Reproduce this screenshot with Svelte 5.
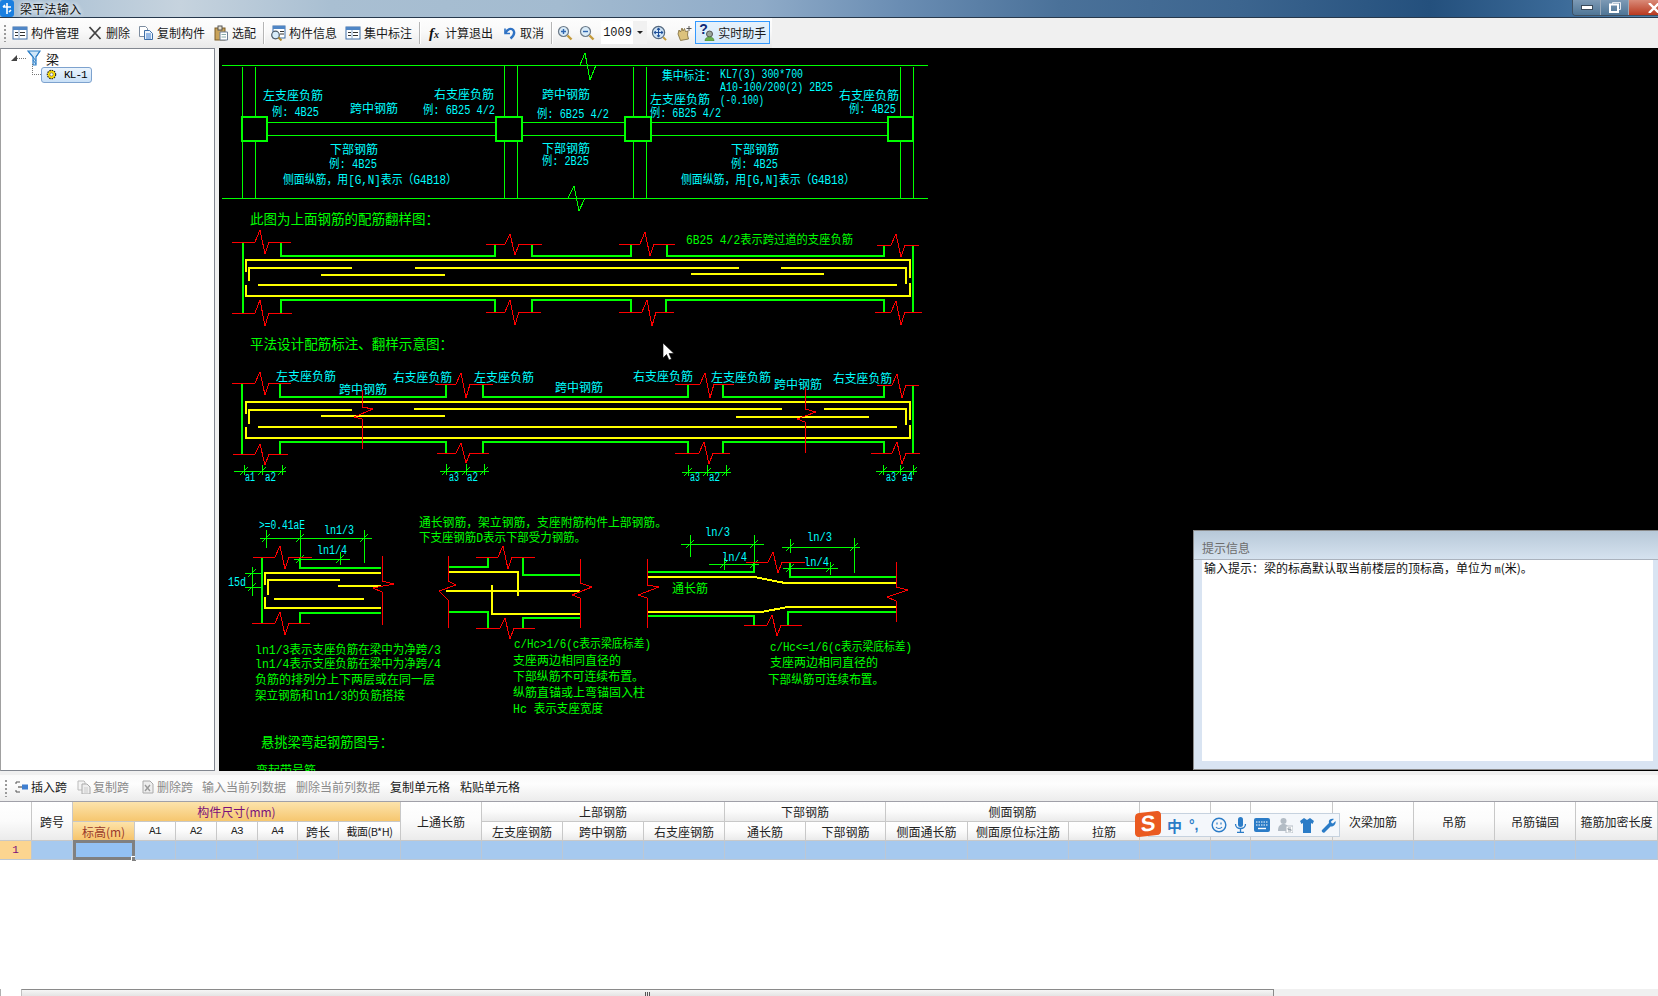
<script lang="ts">
	// zig-zag "break" symbol on a horizontal line
	function brk(x1: number, x2: number, c: number, y: number, up: number, down: number) {
		return `M${x1} ${y}H${c - 7}L${c - 2} ${y - up}L${c + 3} ${y + down}L${c + 7} ${y}H${x2}`;
	}

	// dimension tick: short vertical plus a slash
	function tick(x: number, y: number, y1: number, y2: number) {
		return `M${x} ${y1}V${y2}M${x - 4} ${y + 4}L${x + 4} ${y - 4}`;
	}

	const thin = [
		'M222 65H928', 'M222 198H928',
		'M242 67V117', 'M242 141V198', 'M255 67V117', 'M255 141V198',
		'M504 65V117', 'M504 141V198', 'M517 65V117', 'M517 141V198',
		'M633 67V117', 'M633 141V198', 'M646 67V117', 'M646 141V198',
		'M900 67V117', 'M900 141V198', 'M913 67V117', 'M913 141V198',
		'M267 122H496', 'M267 135H496', 'M522 122H625', 'M522 135H625', 'M651 122H888', 'M651 135H888',
		'M580 65L585 53L590 80L596 65', 'M568 198L574 186L579 211L585 198',
		// dimensions under the second beam
		'M234 471H286', tick(244, 471, 465, 475), tick(262, 471, 465, 475), tick(282, 471, 465, 475),
		'M440 471H489', tick(446, 471, 464, 475), tick(466, 471, 464, 475), tick(484, 471, 464, 475),
		'M682 472H731', tick(688, 472, 465, 476), tick(707, 472, 465, 476), tick(726, 472, 465, 476),
		'M876 471H917', tick(883, 471, 465, 475), tick(900, 471, 465, 475), tick(913, 471, 465, 475),
		// dimensions of the anchorage details
		'M260 538H372', tick(266, 538, 530, 548), tick(300, 538, 530, 548), tick(364, 538, 530, 563),
		'M294 559H350', tick(300, 559, 548, 568), tick(340, 559, 552, 565),
		'M252 567V596', 'M245 573H263', 'M245 587H263', 'M248 577L256 569', 'M248 591L256 583',
		'M681 544H764', tick(690, 544, 535, 557), tick(754, 544, 535, 572),
		'M709 564H759', tick(724, 564, 558, 570), tick(754, 564, 558, 570),
		'M782 547H860', tick(790, 547, 539, 553), tick(854, 547, 538, 573),
		'M783 568H838', tick(790, 568, 562, 575), tick(830, 568, 562, 575)
	];

	const thick = [
		'M242 117H267V141H242Z', 'M496 117H522V141H496Z', 'M625 117H651V141H625Z', 'M888 117H913V141H888Z',
		// first beam
		'M243 242V313', 'M913 245V312',
		'M281 243V256H495V244', 'M532 244V256H631V244', 'M667 244V256H884V245',
		'M281 313V300H495V312', 'M532 312V300H631V312', 'M666 312V300H884V312',
		// second beam
		'M242 383V454', 'M913 385V453',
		'M280 384V397H446V385', 'M483 385V397H688V385', 'M723 385V397H884V386',
		'M280 454V442H446V453', 'M483 453V442H688V453', 'M723 453V442H884V453',
		// details
		'M262 557V623', 'M300 558V568H381', 'M300 623V613H381',
		'M448 567H488V557', 'M523 557V575H580', 'M448 612H488V628', 'M523 628V618H580',
		'M648 572H754V563', 'M790 563V577H896', 'M648 616H754V625', 'M788 625V612H896'
	];

	const yellow = [
		'M246 272V260H910V278', 'M246 285V296H910V283',
		'M249 281V268H352', 'M415 268H739', 'M781 268H906V284', 'M321 275H445', 'M691 274H824', 'M258 285H897',
		'M246 414V402H910V420', 'M246 427V438H910V425',
		'M249 424V410H352', 'M414 409H782', 'M824 409H906V425', 'M321 416H445', 'M736 417H869', 'M258 427H897',
		'M265 585V573H381', 'M265 597V608H381', 'M268 595V580H340', 'M338 586H381', 'M274 599H364',
		'M448 572H518V596', 'M446 591H580', 'M492 585V614H580',
		'M648 577H754L785 583H896', 'M648 612H761L788 607H896'
	];

	const red = [
		brk(232, 291, 262, 242, 12, 12), brk(486, 542, 512, 244, 10, 11), brk(619, 675, 647, 244, 12, 12), brk(877, 919, 898, 245, 11, 12),
		brk(232, 292, 262, 313, 13, 13), brk(486, 541, 512, 312, 12, 13), brk(619, 674, 649, 312, 12, 14), brk(875, 922, 898, 312, 11, 13),
		brk(232, 291, 262, 383, 11, 12), brk(435, 493, 463, 384, 11, 14), brk(675, 734, 707, 384, 11, 14), brk(877, 919, 899, 385, 11, 13),
		brk(233, 288, 262, 454, 10, 11), brk(437, 489, 463, 453, 10, 10), brk(675, 730, 706, 453, 11, 11), brk(871, 920, 899, 453, 11, 11),
		'M362 390V407L373 409L354 417L362 419V449', 'M805 387V409L816 412L797 419L805 422V453',
		brk(253, 312, 282, 557, 11, 12), brk(252, 310, 282, 623, 11, 12),
		'M382 556V581L394 584L373 588L382 592V625',
		'M448 556V581L456 585L439 591L448 600V628', 'M580 559V583L592 587L572 595L580 598V628',
		brk(476, 535, 505, 557, 11, 12), brk(476, 535, 507, 628, 10, 11),
		'M647 559V585L659 587L638 595L647 598V628', 'M896 562V587L908 590L887 597L896 601V622',
		brk(746, 805, 775, 562, 10, 11), brk(744, 802, 774, 625, 10, 11)
	];

	const cyan = '#00ffff';
	const lime = '#00ff00';

	const labels = [
		['左支座负筋', 263, 100, 60], ['例: 4B25', 272, 116, 47], ['跨中钢筋', 350, 113, 48],
		['右支座负筋', 434, 99, 60], ['例: 6B25 4/2', 423, 114, 72], ['跨中钢筋', 542, 99, 48],
		['例: 6B25 4/2', 537, 118, 72], ['集中标注\uFF1A', 662, 80, 54], ['KL7(3) 300*700', 720, 78, 83],
		['A10-100/200(2) 2B25', 720, 91, 113], ['左支座负筋', 650, 104, 60], ['(-0.100)', 720, 104, 44],
		['例: 6B25 4/2', 650, 117, 71], ['右支座负筋', 839, 100, 60], ['例: 4B25', 849, 113, 47],
		['下部钢筋', 330, 154, 48], ['例: 4B25', 329, 168, 48], ['侧面纵筋\uFF0C用[G,N]表示\uFF08G4B18\uFF09', 283, 184, 174],
		['下部钢筋', 542, 153, 48], ['例: 2B25', 542, 165, 47], ['下部钢筋', 731, 154, 48],
		['例: 4B25', 731, 168, 47], ['侧面纵筋\uFF0C用[G,N]表示\uFF08G4B18\uFF09', 681, 184, 174],
		['左支座负筋', 276, 381, 60], ['跨中钢筋', 339, 394, 48], ['右支座负筋', 393, 382, 59],
		['左支座负筋', 474, 382, 60], ['跨中钢筋', 555, 392, 48], ['右支座负筋', 633, 381, 60],
		['左支座负筋', 711, 382, 60], ['跨中钢筋', 774, 389, 48], ['右支座负筋', 833, 383, 59],
		['a1', 245, 481, 10], ['a2', 265, 481, 11], ['a3', 449, 481, 10], ['a2', 467, 481, 11],
		['a3', 690, 481, 10], ['a2', 709, 481, 11], ['a3', 886, 481, 10], ['a4', 902, 481, 11],
		['>=0.41aE', 259, 529, 46], ['ln1/3', 324, 534, 30], ['ln1/4', 317, 554, 30], ['15d', 228, 586, 18],
		['ln/3', 705, 536, 25], ['ln/4', 722, 561, 25], ['ln/3', 807, 541, 25], ['ln/4', 804, 566, 25]
	];

	const notes = [
		['6B25 4/2表示跨过道的支座负筋', 686, 244, 167],
		['通长钢筋\uFF0C架立钢筋\uFF0C支座附筋构件上部钢筋。', 419, 527, 248], ['下支座钢筋D表示下部受力钢筋。', 419, 542, 167],
		['ln1/3表示支座负筋在梁中为净跨/3', 255, 654, 186], ['ln1/4表示支座负筋在梁中为净跨/4', 255, 668, 186],
		['负筋的排列分上下两层或在同一层', 255, 684, 180], ['架立钢筋和ln1/3的负筋搭接', 255, 700, 150],
		['通长筋', 672, 593, 36],
		['c/Hc>1/6(c表示梁底标差)', 514, 648, 137], ['支座两边相同直径的', 513, 665, 108],
		['下部纵筋不可连续布置。', 513, 681, 131], ['纵筋直锚或上弯锚固入柱', 513, 697, 132], ['Hc 表示支座宽度', 513, 713, 90],
		['c/Hc<=1/6(c表示梁底标差)', 770, 651, 142], ['支座两边相同直径的', 770, 667, 108], ['下部纵筋可连续布置。', 768, 684, 116],
		['弯起带号筋', 256, 775, 60]
	];

	const headings = [
		['此图为上面钢筋的配筋翻样图\uFF1A', 250, 224, 189],
		['平法设计配筋标注、翻样示意图\uFF1A', 250, 349, 203],
		['悬挑梁弯起钢筋图号\uFF1A', 261, 747, 132]
	];

	const widths = [32, 41, 62, 41, 41, 41, 40, 41, 62, 81, 81, 81, 81, 81, 80, 82, 101, 71, 71, 40, 82, 81, 81, 81, 82];
	const gridCols = widths.map((w) => w + 'px').join(' ');

	// tall = spans both header rows, cols = spans several columns
	const head = [
		{ t: '', tall: true },
		{ t: '跨号', tall: true },
		{ t: '构件尺寸(mm)', cols: 7, kind: 'orange' },
		{ t: '上通长筋', tall: true },
		{ t: '上部钢筋', cols: 3 },
		{ t: '下部钢筋', cols: 2 },
		{ t: '侧面钢筋', cols: 3 },
		{ t: '', tall: true },
		{ t: '', tall: true },
		{ t: '', tall: true },
		{ t: '次梁加筋', tall: true },
		{ t: '吊筋', tall: true },
		{ t: '吊筋锚固', tall: true },
		{ t: '箍筋加密长度', tall: true },
		{ t: '标高(m)', kind: 'active' },
		{ t: 'A1', kind: 'mono' }, { t: 'A2', kind: 'mono' }, { t: 'A3', kind: 'mono' }, { t: 'A4', kind: 'mono' },
		{ t: '跨长' }, { t: '截面(B*H)', kind: 'narrow' },
		{ t: '左支座钢筋' }, { t: '跨中钢筋' }, { t: '右支座钢筋' },
		{ t: '通长筋' }, { t: '下部钢筋' },
		{ t: '侧面通长筋' }, { t: '侧面原位标注筋' }, { t: '拉筋' }
	];
</script>

{#snippet listIcon()}
	<svg class="ico" viewBox="0 0 16 16">
		<rect x="1" y="2" width="14" height="12" fill="#fff" stroke="#3f6fa8"/>
		<rect x="1" y="2" width="14" height="3" fill="#4f86c6"/>
		<path d="M3 7.5h3M3 10.5h3M8 7.5h5M8 10.5h5" stroke="#333" fill="none"/>
		<path d="M7 5v9" stroke="#8aa8cc"/>
	</svg>
{/snippet}

<div class="app">
	<header class="titlebar">
		<svg class="app-icon" viewBox="0 0 14 17">
			<rect x="0" y="0" width="14" height="17" rx="3" fill="#1a7fe0"/>
			<path d="M7 3v11M3 7h8M3 7l2-2M11 10l-2 2" stroke="#fff" stroke-width="1.6" fill="none"/>
		</svg>
		<span class="title">梁平法输入</span>
		<div class="win-btns">
			<div class="win-btn">
				<svg width="12" height="6" viewBox="0 0 12 6"><rect x="0.5" y="0.5" width="11" height="4" fill="#fff" stroke="#3a4a5a"/></svg>
			</div>
			<div class="win-btn">
				<svg width="12" height="11" viewBox="0 0 12 11"><path d="M3.5 2V.5h8v7H10" fill="none" stroke="#dfe6ee"/><rect x="1" y="2.5" width="8" height="7.5" fill="none" stroke="#fff" stroke-width="2"/></svg>
			</div>
			<div class="win-btn close">
				<svg width="12" height="10" viewBox="0 0 12 10"><path d="M1 0l10 10M11 0L1 10" stroke="#fff" stroke-width="2.4"/></svg>
			</div>
		</div>
	</header>

	<div class="toolbar">
		<div class="strip">
			<span class="grip"></span>
			<div class="tool">{@render listIcon()}<span>构件管理</span></div>
			<div class="tool">
				<svg class="ico" viewBox="0 0 16 16"><path d="M2.5 2l11 12M13.5 2l-11 12" stroke="#444" stroke-width="1.8"/></svg>
				<span>删除</span>
			</div>
			<div class="tool">
				<svg class="ico" viewBox="0 0 16 16">
					<path d="M1.5 1.5h6l2 2v8h-8z" fill="#fff" stroke="#7d8da0"/>
					<path d="M6.5 5.5h5l3 3v6h-8z" fill="#eef4fb" stroke="#3f6fa8"/>
					<path d="M8 9h5M8 11h5M8 13h5" stroke="#3f7fd0"/>
				</svg>
				<span>复制构件</span>
			</div>
			<div class="tool">
				<svg class="ico" viewBox="0 0 16 16">
					<rect x="2" y="3" width="10" height="12" fill="#c9a35a" stroke="#7a5c28"/>
					<rect x="5" y="1" width="4" height="4" fill="#e8e2d0" stroke="#555"/>
					<path d="M7 7h7.5v8H7z" fill="#fff" stroke="#6d7f96"/>
					<path d="M8.5 9.5h4.5M8.5 12h4.5" stroke="#8aa"/>
				</svg>
				<span>选配</span>
			</div>
			<span class="sep"></span>
			<div class="tool">
				<svg class="ico" viewBox="0 0 16 16">
					<rect x="3" y="1" width="12" height="12" fill="#fff" stroke="#3f6fa8"/>
					<rect x="3" y="1" width="12" height="3" fill="#4f86c6"/>
					<path d="M10 6.5h4M10 9h4" stroke="#333"/>
					<circle cx="5.5" cy="10" r="3.8" fill="#d7ecfa" stroke="#4b5a66" stroke-width="1.2"/>
					<path d="M8.5 12.5l3 3" stroke="#b08a30" stroke-width="2"/>
				</svg>
				<span>构件信息</span>
			</div>
			<div class="tool">{@render listIcon()}<span>集中标注</span></div>
			<span class="sep"></span>
			<div class="tool">
				<span class="ico fx">f<small>x</small></span>
				<span>计算退出</span>
			</div>
			<div class="tool">
				<svg class="ico" viewBox="0 0 16 16">
					<path d="M4 3.5v5h5" fill="none" stroke="#2f72c4" stroke-width="1.6"/>
					<path d="M4.5 8C6 4 10.5 2.5 12.5 5.5 14 8 12.5 11 9.5 13.5" fill="none" stroke="#2f72c4" stroke-width="2.4"/>
				</svg>
				<span>取消</span>
			</div>
			<span class="sep"></span>
			<div class="tool bare">
				<svg class="ico" viewBox="0 0 16 16">
					<circle cx="6.5" cy="6.5" r="5" fill="#d9ebf8" stroke="#6c7a88" stroke-width="1.2"/>
					<path d="M4 6.5h5M6.5 4v5" stroke="#2f66b0" stroke-width="1.4"/>
					<path d="M10.5 10.5l4 4" stroke="#c49a3a" stroke-width="2.4"/>
				</svg>
			</div>
			<div class="tool bare">
				<svg class="ico" viewBox="0 0 16 16">
					<circle cx="6.5" cy="6.5" r="5" fill="#d9ebf8" stroke="#6c7a88" stroke-width="1.2"/>
					<path d="M4 6.5h5" stroke="#2f66b0" stroke-width="1.4"/>
					<path d="M10.5 10.5l4 4" stroke="#c49a3a" stroke-width="2.4"/>
				</svg>
			</div>
			<div class="combo">
				<span>1009</span>
				<span class="caret"></span>
			</div>
			<div class="tool fit">
				<svg class="ico" viewBox="0 0 17 17">
					<circle cx="8" cy="8" r="6.5" fill="#cfe4f7" stroke="#566a80" stroke-width="1.3"/>
					<path d="M8 3.5v9M3.5 8h9M6.5 5L8 3.5 9.5 5M6.5 11L8 12.5 9.5 11M5 6.5L3.5 8 5 9.5M11 6.5L12.5 8 11 9.5" fill="none" stroke="#1f4f9a" stroke-width="1.1"/>
					<path d="M13 13l3 3" stroke="#c49a3a" stroke-width="2"/>
				</svg>
			</div>
			<div class="tool hand">
				<svg class="ico" viewBox="0 0 16 16">
					<path d="M2 9l1-4 1.5 2L6 3l1 3 1.5-2.5L9.500 6.500 12 6l-.5 4 1 4-8 1.500z" fill="#dcc27c" stroke="#7c6a3a" stroke-width=".8"/>
					<path d="M13 1v5M10.500 3.500h5" stroke="#555"/>
				</svg>
			</div>
			<div class="tool active">
				<svg class="ico" viewBox="0 0 16 16">
					<circle cx="10.500" cy="9" r="3" fill="#9aa69a" stroke="#555"/>
					<path d="M6 16c0-3 2-4 4.500-4s4.500 1 4.500 4z" fill="#6ab04c" stroke="#3f7a2c" stroke-width=".6"/>
				</svg>
				<span class="qmark">?</span>
				<span class="label">实时助手</span>
			</div>
		</div>
	</div>

	<main class="main">
		<aside class="tree">
			<div class="tree-row root">
				<span class="arrow"></span>
				<span class="dots"></span>
				<svg class="beam" width="14" height="16" viewBox="0 0 14 16">
					<path d="M1 1h12L9 7v8H6V7z" fill="#cfe6f8" stroke="#2f80c8" stroke-width="1.200"/>
					<path d="M6 7l3 4M6 10l3 4M1 1l5 6M13 1L9 7" fill="none" stroke="#2f80c8"/>
				</svg>
				<span>梁</span>
			</div>
			<div class="tree-row leaf">
				<span class="elbow"></span>
				<div class="node">
					<svg width="11" height="11" viewBox="0 0 10 10">
						<circle cx="5" cy="5" r="3.800" fill="#ffe000" stroke="#222" stroke-width="1" stroke-dasharray="1.400 .8"/>
						<circle cx="5" cy="5" r="1.500" fill="#fff" stroke="#555" stroke-width=".6"/>
					</svg>
					<span>KL-1</span>
				</div>
			</div>
		</aside>

		<section class="canvas">
			<svg class="drawing" width="1439" height="723" viewBox="219 48 1439 723">
				<g class="lines">
					{#each thin as d}<path {d} stroke="#00ff00" stroke-width="1"/>{/each}
					{#each thick as d}<path {d} stroke="#00ff00" stroke-width="2"/>{/each}
					{#each yellow as d}<path {d} stroke="#ffff00" stroke-width="2"/>{/each}
					{#each red as d}<path {d} stroke="#ff0000" stroke-width="1"/>{/each}
				</g>
				<g class="cad-text">
					{#each labels as [t, x, y, w]}
						<text {x} {y} fill={cyan} textLength={w} lengthAdjust="spacingAndGlyphs">{t}</text>
					{/each}
					{#each notes as [t, x, y, w]}
						<text {x} {y} fill={lime} textLength={w} lengthAdjust="spacingAndGlyphs">{t}</text>
					{/each}
					{#each headings as [t, x, y, w]}
						<text {x} {y} fill={lime} font-size="14" textLength={w} lengthAdjust="spacingAndGlyphs">{t}</text>
					{/each}
				</g>
				<path d="M663 343v15l3.500-3.500 2.500 5.500 2.500-1-2.500-5.500h5z" fill="#fff" stroke="#000" stroke-width=".6"/>
			</svg>

			<div class="hint">
				<div class="hint-title">提示信息</div>
				<div class="hint-body">输入提示&#xFF1A;梁的标高默认取当前楼层的顶标高&#xFF0C;单位为 <span class="hint-m">m</span>(米)。</div>
			</div>
		</section>
	</main>

	<div class="gap"></div>

	<div class="toolbar2">
		<span class="grip"></span>
		<div class="tool2">
			<svg class="ico2" viewBox="0 0 14 14">
				<path d="M1 2h4M1 2v2M1 12h4M1 12v-2" stroke="#555" fill="none"/>
				<path d="M3 7h4" stroke="#333"/>
				<rect x="7" y="4.500" width="6" height="5" fill="#3f7fd0"/>
			</svg>
			<span>插入跨</span>
		</div>
		<div class="tool2 off">
			<svg class="ico2" viewBox="0 0 14 14">
				<path d="M1 1h6l1 1v8H1z" fill="#f4f4f4" stroke="#bbb"/>
				<path d="M5 4h5l3 3v7H5z" fill="#eee" stroke="#aaa"/>
				<path d="M7 8h4M7 10h4M7 12h4" stroke="#ccc"/>
			</svg>
			<span>复制跨</span>
		</div>
		<div class="tool2 off">
			<svg class="ico2" viewBox="0 0 14 14">
				<path d="M2 1h7l3 3v9H2z" fill="#eee" stroke="#aaa"/>
				<path d="M4 5l5 6M9 5l-5 6" stroke="#999" stroke-width="1.400"/>
			</svg>
			<span>删除跨</span>
		</div>
		<div class="tool2 off"><span>输入当前列数据</span></div>
		<div class="tool2 off"><span>删除当前列数据</span></div>
		<div class="tool2"><span>复制单元格</span></div>
		<div class="tool2"><span>粘贴单元格</span></div>
	</div>

	<div class="table-wrap">
		<div class="grid" style="grid-template-columns: {gridCols}">
			{#each head as h}
				<div
					class="hcell {h.kind ?? ''}"
					class:tall={h.tall}
					style={h.cols ? `grid-column: span ${h.cols}` : undefined}
				>{h.t}</div>
			{/each}
			{#each widths as _, i}
				{#if i === 0}
					<div class="dcell rownum">1</div>
				{:else if i === 2}
					<div class="dcell selected"><span class="handle"></span></div>
				{:else}
					<div class="dcell"></div>
				{/if}
			{/each}
		</div>

		<div class="ime">
			<div class="ime-logo">S</div>
			<span class="ime-zh">中</span>
			<span class="ime-punct">°,</span>
			<svg width="16" height="16" viewBox="0 0 16 16">
				<circle cx="8" cy="8" r="6.800" fill="none" stroke="#2b7cc7" stroke-width="1.400"/>
				<path d="M6 5.500v2M10 5.500v2M5 10c1.500 2 4.500 2 6 0" fill="none" stroke="#2b7cc7" stroke-width="1.200"/>
			</svg>
			<svg width="13" height="16" viewBox="0 0 13 16">
				<rect x="4" y="0" width="5" height="10" rx="2.500" fill="#2b7cc7"/>
				<path d="M1.500 7c0 6 10 6 10 0M6.500 12v3M3 15.500h7" fill="none" stroke="#2b7cc7" stroke-width="1.300"/>
			</svg>
			<svg width="16" height="14" viewBox="0 0 16 14">
				<rect x="0" y="0" width="16" height="14" rx="2" fill="#2b7cc7"/>
				<path d="M2 4h12M2 7h12" stroke="#fff" stroke-dasharray="1.500 1"/>
				<path d="M4 10.500h8" stroke="#fff" stroke-width="1.400"/>
			</svg>
			<svg width="16" height="16" viewBox="0 0 16 16">
				<circle cx="6.500" cy="4" r="3" fill="#b3bcc5"/>
				<path d="M1 14c0-5 2-7 5.500-7S12 9 12 14z" fill="#b3bcc5"/>
				<rect x="9" y="9" width="7" height="7" fill="#fff" stroke="#b3bcc5"/>
				<path d="M14 11h-3v1.500h3V14h-3" fill="none" stroke="#99a3ad"/>
			</svg>
			<svg width="14" height="15" viewBox="0 0 14 15">
				<path d="M4 0L0 3l1.500 3L3 5v10h8V5l1.500 1L14 3l-4-3-3 2z" fill="#2b7cc7"/>
			</svg>
			<svg width="15" height="15" viewBox="0 0 15 15">
				<path d="M1 12l7-7C7 2 10 0 13 1l-3 2.500.5 1.500 1.500.5L14.500 3c.8 3-2 6-5 5.500l-6 6c-1.500 1-3.500-1-2.500-2.500z" fill="#2b7cc7"/>
			</svg>
		</div>
	</div>

	<div class="hscroll">
		<span class="scroll-btn"></span>
		<div class="thumb"><span class="thumb-grip"></span></div>
	</div>
</div>

<style>
	:global(body) {
		margin: 0;
		background: #f0f0f0;
	}

	.app {
		width: 1658px;
		height: 996px;
		display: flex;
		flex-direction: column;
		overflow: hidden;
		background: #f0f0f0;
		font-family: "Noto Sans CJK SC", "Liberation Sans", sans-serif;
		font-size: 12px;
		color: #1a1a1a;
	}

	.titlebar {
		height: 17px;
		flex-shrink: 0;
		display: flex;
		align-items: center;
		border-bottom: 1px solid #26384c;
		background: linear-gradient(90deg, #a5bdd2 0, #c6d3de 180px, #a9bfd2 330px, #a3bbd0 560px, #8fabc8 760px, #6a8db3 900px, #4a7199 1060px, #3c658f 1240px, #24507d 1430px, #3b6a98 1560px, #5583ad 1658px);
	}

	.app-icon {
		width: 14px;
		height: 17px;
		display: block;
	}

	.title {
		margin-left: 6px;
		font-size: 12px;
		letter-spacing: 0.3px;
		color: #111;
		text-shadow: 0 0 5px #fff, 0 0 5px #fff;
	}

	.win-btns {
		margin-left: auto;
		height: 15px;
		align-self: flex-start;
		display: flex;
		border: 1px solid #3f5163;
		border-top: 0;
		border-right: 0;
		border-radius: 0 0 0 4px;
		overflow: hidden;
	}

	.win-btn {
		width: 27px;
		display: flex;
		align-items: center;
		justify-content: center;
		border-right: 1px solid #9ab;
		background: linear-gradient(#7d9ab5, #4f7596);
	}

	.win-btn.close {
		width: 29px;
		border-right: 0;
		justify-content: flex-start;
		padding-left: 19px;
		box-sizing: border-box;
		background: linear-gradient(#d98a78, #b9391f);
	}

	.win-btn.close svg {
		flex-shrink: 0;
	}

	.toolbar {
		height: 30px;
		flex-shrink: 0;
		display: flex;
		background: #f0f0f0;
	}

	.strip {
		width: 772px;
		display: flex;
		align-items: center;
		padding: 0 0 1px 8px;
		box-sizing: border-box;
		position: relative;
		white-space: nowrap;
		background: linear-gradient(#fdfdfd, #f9f9f9 45%, #e9e9e9);
	}

	.grip {
		position: absolute;
		left: 4px;
		top: 7px;
		width: 2px;
		height: 17px;
		background: repeating-linear-gradient(#9a9a9a 0 2px, transparent 2px 4px);
	}

	.tool {
		display: flex;
		align-items: center;
		gap: 3px;
		padding: 0 4px;
	}

	.ico {
		width: 16px;
		height: 16px;
		display: block;
		flex-shrink: 0;
	}

	.fx {
		font-family: "Liberation Serif", serif;
		font-style: italic;
		font-weight: 700;
		font-size: 15px;
		line-height: 16px;
		text-align: center;
		color: #111;
	}

	.fx small {
		font-size: 10px;
	}

	.sep {
		width: 1px;
		height: 22px;
		margin: 0 2px 0 3px;
		background: #b5b5b5;
		box-shadow: 1px 0 0 #fff;
	}

	.tool.bare {
		padding: 0 3px;
	}

	.combo {
		width: 46px;
		height: 23px;
		margin-left: 3px;
		display: flex;
		align-items: center;
		justify-content: space-between;
		background: #fff;
		font-family: "Liberation Mono", monospace;
		padding-left: 2px;
		box-sizing: border-box;
	}

	.caret {
		width: 14px;
		height: 100%;
		background: #f1f1f1;
		position: relative;
	}

	.caret::after {
		content: "";
		position: absolute;
		left: 4px;
		top: 10px;
		border: 3px solid transparent;
		border-top: 3px solid #222;
	}

	.tool.fit {
		padding: 0 5px 0 4px;
	}

	.tool.hand {
		padding: 0 2px 0 4px;
	}

	.tool.active {
		position: relative;
		margin-left: 1px;
		height: 23px;
		padding: 0 0 0 3px;
		width: 75px;
		flex-shrink: 0;
		box-sizing: border-box;
		border: 1px solid #3399ff;
		background: linear-gradient(#e6f2fc, #d6e9fa);
	}

	.label {
		white-space: nowrap;
		flex-shrink: 0;
	}

	.qmark {
		position: absolute;
		left: 3px;
		top: 0;
		font: bold 14px/14px "Liberation Sans", sans-serif;
		color: #0f2a78;
	}

	.main {
		height: 723px;
		flex-shrink: 0;
		display: flex;
	}

	.tree {
		width: 215px;
		margin-right: 4px;
		flex-shrink: 0;
		box-sizing: border-box;
		background: #fff;
		border: 1px solid #828790;
		border-left-color: #a0a0a0;
	}

	.tree-row {
		display: flex;
		align-items: center;
		height: 16px;
	}

	.tree-row.root {
		padding: 1px 0 0 10px;
		font-size: 13px;
		line-height: 15px;
	}

	.arrow {
		width: 0;
		height: 0;
		border-left: 6px solid transparent;
		border-bottom: 6px solid #444;
	}

	.dots {
		width: 9px;
		margin-right: 1px;
		border-top: 1px dotted #777;
	}

	.beam {
		margin-right: 5px;
	}

	.tree-row.leaf {
		padding-left: 31px;
		height: 17px;
	}

	.elbow {
		width: 8px;
		height: 10px;
		margin-top: -10px;
		border-left: 1px dotted #777;
		border-bottom: 1px dotted #777;
	}

	.node {
		width: 51px;
		height: 16px;
		box-sizing: border-box;
		display: flex;
		align-items: center;
		gap: 7px;
		padding-left: 4px;
		border: 1px solid #7da2ce;
		border-radius: 3px;
		background: linear-gradient(#ebf4fd, #c9e0f7);
		font-family: "Liberation Mono", monospace;
		font-size: 11px;
		letter-spacing: -0.9px;
		color: #000;
	}

	.canvas {
		flex: 1;
		position: relative;
		background: #000;
		overflow: hidden;
	}

	.drawing {
		display: block;
	}

	.lines path {
		fill: none;
		shape-rendering: crispEdges;
	}

	.cad-text {
		font-family: "Liberation Mono", "Noto Sans CJK SC", monospace;
		font-size: 12px;
	}

	.hint {
		position: absolute;
		right: 0;
		bottom: 1px;
		width: 465px;
		height: 240px;
		box-sizing: border-box;
		display: flex;
		flex-direction: column;
		border: 1px solid #8a8a8a;
		border-right: 0;
		background: #d9e4f2;
		padding: 0 5px 8px 8px;
	}

	.hint-title {
		height: 29px;
		margin: 0 -5px 0 -8px;
		padding: 9px 0 0 8px;
		box-sizing: border-box;
		flex-shrink: 0;
		color: #6c6c6c;
		line-height: 16px;
		background: linear-gradient(#b7c8d8, #d5e2ef);
		border-bottom: 1px solid #aab2bd;
	}

	.hint-body {
		flex: 1;
		background: #fff;
		color: #111;
		padding: 0 2px;
		line-height: 16px;
		white-space: nowrap;
	}

	.hint-m {
		font-family: "Liberation Mono", monospace;
		font-size: 10px;
	}

	.gap {
		height: 4px;
		flex-shrink: 0;
	}

	.toolbar2 {
		height: 26px;
		flex-shrink: 0;
		display: flex;
		align-items: center;
		padding: 0 0 3px 15px;
		box-sizing: border-box;
		position: relative;
		background: linear-gradient(#fafafa, #fdfdfd 35%, #ececec);
	}

	.toolbar2 .grip {
		left: 5px;
		top: 5px;
	}

	.tool2 {
		display: flex;
		align-items: center;
		gap: 2px;
		margin-right: 10px;
	}

	.tool2:nth-child(2) {
		margin-right: 10px;
	}

	.tool2:nth-child(3) {
		margin-right: 12px;
	}

	.tool2:nth-child(4) {
		margin-right: 9px;
	}

	.ico2 {
		width: 14px;
		height: 14px;
		display: block;
	}

	.tool2.off {
		color: #8a8a8a;
	}

	.table-wrap {
		position: relative;
		flex: 1;
		background: #fff;
		border-top: 1px solid #a0a0a8;
		border-left: 1px solid #b0b0b0;
		margin-left: -1px;
	}

	.grid {
		display: grid;
		grid-template-rows: 20px 19px 19px;
	}

	.hcell {
		display: flex;
		align-items: center;
		justify-content: center;
		box-sizing: border-box;
		white-space: nowrap;
		overflow: hidden;
		color: #222;
		font-size: 12px;
		border-right: 1px solid #c8c8c8;
		border-bottom: 1px solid #c8c8c8;
		background: linear-gradient(#ffffff, #fbfbfb 50%, #ebebeb);
	}

	.hcell.tall {
		grid-row: span 2;
	}

	.hcell.orange {
		background: linear-gradient(#fce3ac, #f6c76f);
		color: #7a0f7a;
	}

	.hcell.active {
		background: linear-gradient(#fde3a9, #f6c46c);
		color: #9a3a2a;
	}

	.hcell.narrow {
		font-size: 11px;
		letter-spacing: -0.5px;
	}

	.hcell.mono {
		font-family: "Liberation Mono", monospace;
		font-size: 11px;
		letter-spacing: -0.5px;
	}

	.dcell {
		position: relative;
		box-sizing: border-box;
		background: #a6c9ef;
		border-right: 1px solid #bcc7d4;
		border-bottom: 1px solid #bcc7d4;
	}

	.dcell.rownum {
		background: #fcd590;
		color: #7a0f7a;
		font-family: "Liberation Mono", monospace;
		font-size: 11px;
		line-height: 19px;
		text-align: center;
	}

	.dcell.selected {
		background: #93c1f3;
		border: 3px solid #808080;
		margin-top: -1px;
		height: 20px;
	}

	.handle {
		position: absolute;
		right: -5px;
		bottom: -5px;
		width: 4px;
		height: 4px;
		background: #808080;
		border: 1px solid #fff;
	}

	.ime {
		position: absolute;
		left: 1148px;
		top: 11px;
		width: 192px;
		height: 24px;
		box-sizing: border-box;
		display: flex;
		align-items: center;
		gap: 7px;
		padding-left: 18px;
		background: #f4f7fb;
		border: 1px solid #c6d2df;
	}

	.ime-logo {
		position: absolute;
		left: -14px;
		top: -2px;
		width: 26px;
		height: 24px;
		border-radius: 4px;
		background: #ea5a20;
		color: #fff;
		font: bold 22px/24px "Liberation Sans", sans-serif;
		text-align: center;
		transform: skewY(-6deg);
	}

	.ime-zh {
		font-size: 15px;
		font-weight: 700;
		color: #2b7cc7;
	}

	.ime-punct {
		font: bold 14px/16px "Liberation Sans", sans-serif;
		color: #2b7cc7;
		width: 15px;
	}

	.hscroll {
		height: 7px;
		flex-shrink: 0;
		display: flex;
		background: #f0f0f0;
		position: relative;
		border-left: 1px solid #b0b0b0;
		box-sizing: border-box;
	}

	.scroll-btn {
		width: 20px;
		background: #fff;
	}

	.thumb {
		width: 1253px;
		box-sizing: border-box;
		border-top: 1px solid #8a8a8a;
		border-right: 1px solid #8a8a8a;
		border-left: 1px solid #c0c0c0;
		background: linear-gradient(#f6f6f6, #e4e4e4);
		display: flex;
		justify-content: center;
	}

	.thumb-grip {
		width: 5px;
		margin-top: 2px;
		background: repeating-linear-gradient(90deg, #555 0 1px, transparent 1px 2px);
	}
</style>
